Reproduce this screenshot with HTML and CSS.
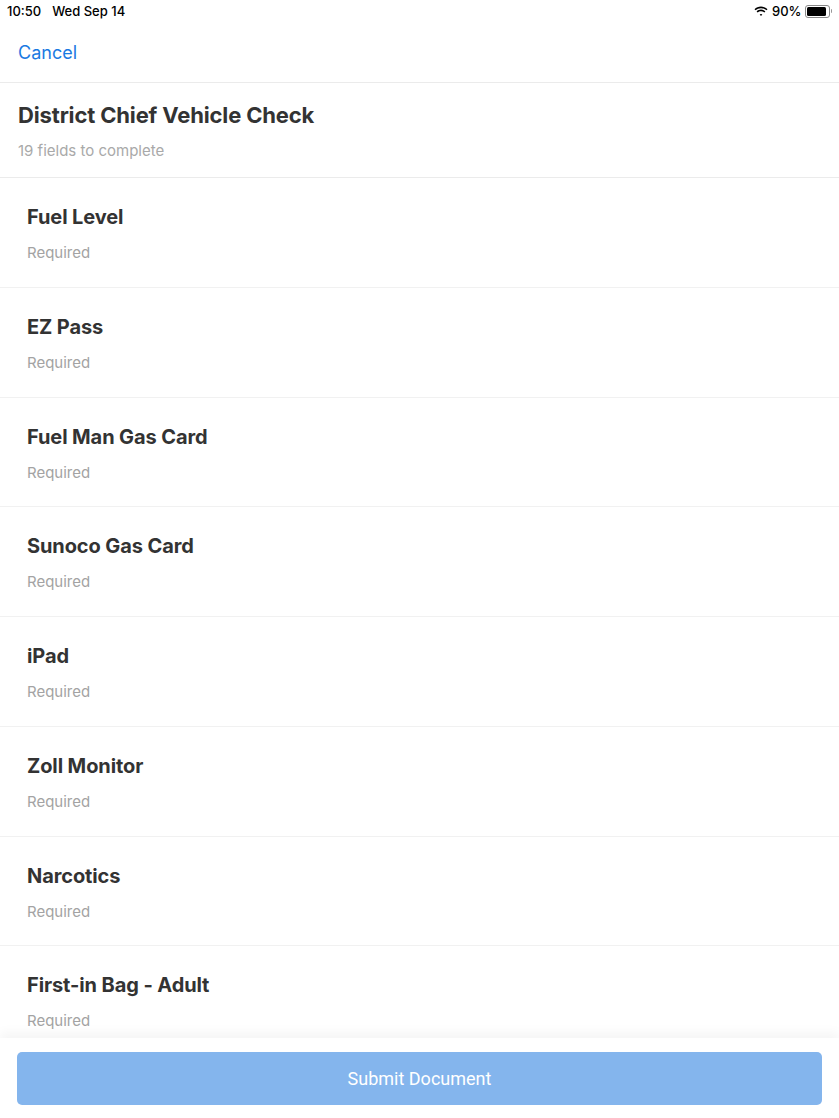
FILE: index.html
```html
<!DOCTYPE html>
<html>
<head>
<meta charset="utf-8">
<link rel="stylesheet" href="styles.css">
</head>
<body>
<div class="app">
  <div class="statusbar">
    <div class="sb-left"><span>10:50</span><span>Wed Sep 14</span></div>
    <div class="sb-right">
      <svg class="wifi" width="14" height="11" viewBox="0 0 14 11"><path d="M7 2.2c2.1 0 4 .8 5.4 2.1l1.1-1.1C11.8 1.6 9.5.6 7 .6S2.2 1.6.5 3.2l1.1 1.1C3 3 4.9 2.2 7 2.2z" fill="#000"/><path d="M7 5.2c1.3 0 2.4.5 3.3 1.3l1.1-1.1C10.2 4.3 8.7 3.6 7 3.6S3.8 4.3 2.6 5.4l1.1 1.1C4.6 5.7 5.7 5.2 7 5.2z" fill="#000"/><path d="M7 8.1c.5 0 1 .2 1.3.5L7 10 5.7 8.6c.3-.3.8-.5 1.3-.5z" fill="#000"/></svg>
      <span>90%</span>
      <div class="battery"><div class="battery-fill"></div></div>
      <div class="battery-tip"></div>
    </div>
  </div>
  <div class="navbar"><span class="cancel">Cancel</span></div>
  <div class="header">
    <div class="doc-title">District Chief Vehicle Check</div>
    <div class="doc-sub">19 fields to complete</div>
  </div>
  <div class="list">
    <div class="row"><div class="row-title">Fuel Level</div><div class="row-sub">Required</div></div>
    <div class="row"><div class="row-title">EZ Pass</div><div class="row-sub">Required</div></div>
    <div class="row"><div class="row-title">Fuel Man Gas Card</div><div class="row-sub">Required</div></div>
    <div class="row"><div class="row-title">Sunoco Gas Card</div><div class="row-sub">Required</div></div>
    <div class="row"><div class="row-title">iPad</div><div class="row-sub">Required</div></div>
    <div class="row"><div class="row-title">Zoll Monitor</div><div class="row-sub">Required</div></div>
    <div class="row"><div class="row-title">Narcotics</div><div class="row-sub">Required</div></div>
    <div class="row"><div class="row-title">First-in Bag - Adult</div><div class="row-sub">Required</div></div>
  </div>
  <div class="footer">
    <button class="submit">Submit Document</button>
  </div>
</div>
</body>
</html>
```
FILE: styles.css
```css
html, body {
  margin: 0;
  padding: 0;
  background: #fff;
}
.app {
  height: 1118px;
  display: flex;
  flex-direction: column;
  font-family: "Inter", "Liberation Sans", sans-serif;
  color: #333;
  overflow: hidden;
}
.statusbar {
  height: 22px;
  display: flex;
  justify-content: space-between;
  align-items: center;
  padding: 0 7px 0 7px;
  font-size: 13px;
  font-weight: 500;
  color: #000;
  flex-shrink: 0;
}
.sb-left {
  display: flex;
  gap: 11px;
}
.sb-right {
  display: flex;
  align-items: center;
}
.wifi {
  margin-right: 4px;
}
.sb-right span {
  margin-right: 3px;
}
.battery {
  width: 21px;
  height: 9px;
  border: 1px solid #888;
  border-radius: 3px;
  padding: 1px;
  box-sizing: content-box;
}
.battery-fill {
  width: 19px;
  height: 9px;
  background: #000;
  border-radius: 1.5px;
}
.battery-tip {
  width: 1.5px;
  height: 4px;
  background: #999;
  margin-left: 1px;
  border-radius: 0 1px 1px 0;
}
.navbar {
  height: 61px;
  display: flex;
  align-items: center;
  padding: 0 18px;
  border-bottom: 1px solid #ebebeb;
  flex-shrink: 0;
  box-sizing: border-box;
}
.cancel {
  font-size: 18px;
  color: #1a7ae2;
}
.header {
  height: 95px;
  padding: 18px 18px 0;
  box-sizing: border-box;
  border-bottom: 1px solid #ebebeb;
  flex-shrink: 0;
}
.doc-title {
  font-size: 22px;
  font-weight: 700;
  color: #333;
  line-height: 28px;
  letter-spacing: -0.15px;
}
.doc-sub {
  font-size: 15px;
  color: #a9a9a9;
  margin-top: 12px;
  line-height: 19px;
}
.list {
  flex: 1;
  overflow: hidden;
}
.row {
  height: 109.75px;
  box-sizing: border-box;
  padding: 25px 27px 0;
  border-bottom: 1px solid #f1f1f1;
}
.row-title {
  font-size: 20px;
  font-weight: 700;
  line-height: 28px;
  color: #333;
  letter-spacing: -0.1px;
}
.row-sub {
  font-size: 15px;
  color: #a3a3a3;
  margin-top: 12px;
  line-height: 20px;
}
.footer {
  height: 80px;
  flex-shrink: 0;
  background: #fff;
  box-shadow: 0 -6px 10px rgba(0, 0, 0, 0.04);
  padding: 14px 17px 0;
  box-sizing: border-box;
  position: relative;
}
.submit {
  width: 100%;
  height: 53px;
  border: none;
  border-radius: 5px;
  background: #84b5ed;
  color: #fff;
  font-family: "Roboto", "Liberation Sans", sans-serif;
  font-size: 18px;
  font-weight: 400;
  display: block;
}
```
